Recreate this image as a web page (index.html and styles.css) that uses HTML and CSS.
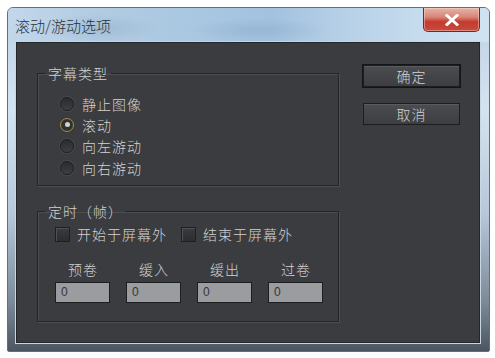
FILE: index.html
```html
<!DOCTYPE html>
<html lang="zh-CN">
<head>
<meta charset="utf-8">
<title>滚动/游动选项</title>
<link rel="stylesheet" href="styles.css">
</head>
<body>
<div class="window">
  <div class="titlebar">
    <span class="title">滚动/游动选项</span>
    <button class="close" type="button" aria-label="关闭">
      <svg width="14" height="12" viewBox="0 0 14 12"><path d="M2 1.5 L12 10.5 M12 1.5 L2 10.5" stroke="#fff" stroke-width="3" stroke-linecap="square"/></svg>
    </button>
  </div>
  <div class="content">
    <div class="left">
      <fieldset class="group group-type">
        <legend>字幕类型</legend>
        <div class="radio-row"><span class="radio"></span><span class="lbl">静止图像</span></div>
        <div class="radio-row"><span class="radio checked"></span><span class="lbl">滚动</span></div>
        <div class="radio-row"><span class="radio"></span><span class="lbl">向左游动</span></div>
        <div class="radio-row"><span class="radio"></span><span class="lbl">向右游动</span></div>
      </fieldset>
      <fieldset class="group group-timing">
        <legend>定时（帧）</legend>
        <div class="check-row">
          <span class="check-item"><span class="checkbox"></span><span class="lbl">开始于屏幕外</span></span>
          <span class="check-item"><span class="checkbox"></span><span class="lbl">结束于屏幕外</span></span>
        </div>
        <div class="fields">
          <div class="field"><span class="field-lbl">预卷</span><span class="input">0</span></div>
          <div class="field"><span class="field-lbl">缓入</span><span class="input">0</span></div>
          <div class="field"><span class="field-lbl">缓出</span><span class="input">0</span></div>
          <div class="field"><span class="field-lbl">过卷</span><span class="input">0</span></div>
        </div>
      </fieldset>
    </div>
    <div class="right">
      <button class="btn default" type="button">确定</button>
      <button class="btn" type="button">取消</button>
    </div>
  </div>
</div>
</body>
</html>
```

FILE: styles.css
```css
* { box-sizing: border-box; }
html, body {
  margin: 0;
  padding: 0;
  background: #ffffff;
  width: 495px;
  height: 358px;
  overflow: hidden;
}
body {
  padding: 7px 0 0 7px;
  font-family: "Noto Sans CJK SC", "Microsoft YaHei", sans-serif;
}
.window {
  width: 483px;
  height: 345px;
  border: 1px solid #5f6f80;
  border-radius: 6px 6px 2px 2px;
  background: linear-gradient(to bottom, #bcd2e6 0%, #d3e3f1 30%, #b6c8d9 60%, #7d8c9b 85%, #4c5661 100%);
  display: flex;
  flex-direction: column;
  padding: 0 9px 8px 8px;
}
.titlebar {
  height: 34px;
  margin: 0 -9px 0 -8px;
  padding: 0 9px 0 7px;
  display: flex;
  align-items: flex-start;
  border-radius: 5px 5px 0 0;
  background:
    radial-gradient(ellipse 60px 14px at 90px 20px, rgba(140,170,200,0.45), rgba(140,170,200,0) 100%),
    radial-gradient(ellipse 70px 12px at 250px 22px, rgba(130,165,200,0.4), rgba(130,165,200,0) 100%),
    linear-gradient(90deg, #c2d7ea 0%, #b1cbe2 20%, #a9c7e1 40%, #a3c2de 55%, #b9d2e8 72%, #c8ddef 88%, #cfe2f2 100%);
}
.title {
  margin-top: 8px;
  font-size: 15px;
  font-weight: 300;
  line-height: 20px;
  color: #26313a;
}
.close {
  margin-left: auto;
  width: 57px;
  height: 24px;
  border: 1px solid #6d2b24;
  border-top: none;
  border-radius: 0 0 5px 5px;
  background: linear-gradient(to bottom, #e6b4aa 0%, #d98476 40%, #c43b2f 60%, #c9493c 100%);
  box-shadow: inset 0 0 0 1px rgba(255,220,210,0.45);
  display: flex;
  align-items: center;
  justify-content: center;
  padding: 0;
}
.content {
  flex: 1;
  background: #3b3c3f;
  border: 1px solid #23262a;
  box-shadow: 0 0 0 1px #c9d5e1;
  display: flex;
  color: #d2d2d2;
  font-size: 14px;
  font-weight: 300;
  letter-spacing: 1px;
}
.left {
  width: 323px;
  padding-left: 20px;
  padding-top: 22px;
  display: flex;
  flex-direction: column;
}
.group {
  margin: 0;
  width: 302px;
  border: 1px solid #232426;
  box-shadow: inset 1px 1px 0 #4d4e52, 1px 1px 0 #4d4e52;
  padding: 0;
  min-width: 0;
}
.group legend {
  margin-left: 7px;
  padding: 0 3px;
  font-size: 14px;
  line-height: 16px;
  color: #d2d2d2;
}
.group-type {
  padding: 12px 0 7px 0;
}
.radio-row {
  height: 21.3px;
  padding-left: 22px;
  display: flex;
  align-items: center;
}
.radio {
  width: 14px;
  height: 14px;
  border-radius: 50%;
  border: 1px solid #1e1f21;
  background: linear-gradient(to bottom, #2a2b2d, #3e3f42);
  box-shadow: 0 0 0 1px #47484c;
  margin-right: 8px;
  display: flex;
  align-items: center;
  justify-content: center;
}
.radio.checked {
  border: 1.5px solid #a88e4e;
  background: #303133;
  box-shadow: 0 0 0 1px #3f3a2e;
}
.radio.checked::after {
  content: "";
  width: 5px;
  height: 5px;
  border-radius: 50%;
  background: #d2d2d2;
}
.group-timing {
  margin-top: 17px;
  padding: 4px 0 18px 0;
}
.check-row {
  height: 22px;
  padding-left: 17px;
  display: flex;
  align-items: center;
}
.check-item {
  display: flex;
  align-items: center;
  margin-right: 14px;
}
.checkbox {
  width: 15px;
  height: 15px;
  border: 1px solid #1e1f21;
  background: linear-gradient(to bottom, #3a3b3e, #2c2d2f);
  box-shadow: inset 1px 1px 0 #505155;
  margin-right: 7px;
}
.fields {
  margin-top: 13px;
  padding-left: 17px;
  display: flex;
  gap: 16px;
}
.field {
  width: 55px;
  display: flex;
  flex-direction: column;
  align-items: center;
}
.field-lbl {
  line-height: 22px;
  letter-spacing: 1px;
  padding-left: 1px;
}
.input {
  margin-top: 2px;
  width: 55px;
  height: 21px;
  background: #9a9c9f;
  border: 1px solid #1d1e20;
  color: #34353a;
  font-family: "Liberation Sans", sans-serif;
  font-size: 12px;
  letter-spacing: 0;
  line-height: 19px;
  padding-left: 5px;
  align-self: stretch;
}
.right {
  padding-top: 21px;
  padding-left: 22px;
  display: flex;
  flex-direction: column;
  align-items: flex-start;
}
.btn {
  width: 97px;
  height: 22px;
  border: 1px solid #1c1d1f;
  background: linear-gradient(to bottom, #4b4c50, #3d3e41);
  box-shadow: inset 0 1px 0 #5a5b5f;
  color: #d2d2d2;
  font-family: "Noto Sans CJK SC", sans-serif;
  font-size: 14px;
  font-weight: 300;
  letter-spacing: 1px;
  line-height: 20px;
  padding: 0;
  margin-left: 1px;
}
.btn.default {
  outline: 1px solid #141516;
  margin-top: 1px;
}
.btn + .btn {
  margin-top: 16px;
}
```
